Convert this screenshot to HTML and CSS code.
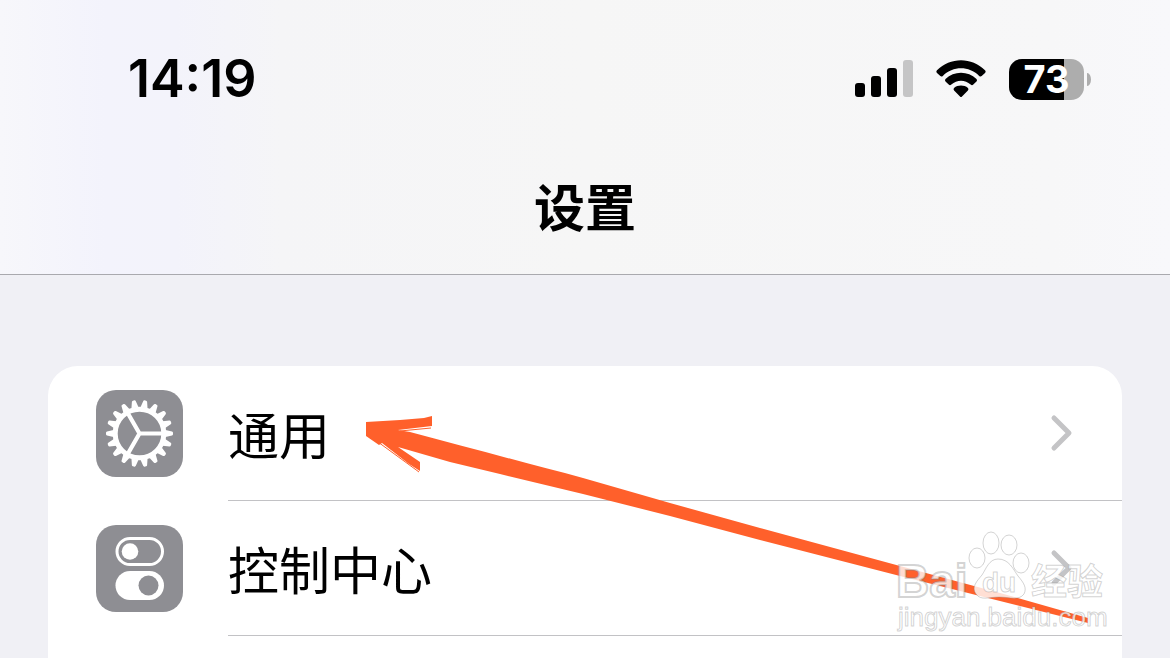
FILE: index.html
```html
<!DOCTYPE html>
<html lang="zh-CN">
<head>
<meta charset="utf-8">
<meta name="viewport" content="width=device-width, initial-scale=1">
<title>设置</title>
<link rel="stylesheet" href="styles.css">
</head>
<body>
<div class="screen">
  <header class="header">
    <div class="status">
      <time class="clock">14:19</time>
      <div class="indicators">
        <svg class="signal" viewBox="0 0 58 38" aria-hidden="true">
          <rect x="0" y="23" width="10" height="14" rx="3"/>
          <rect x="16" y="16" width="10" height="21" rx="3"/>
          <rect x="32" y="8" width="10" height="29" rx="3"/>
          <rect class="signal-off" x="48" y="0" width="10" height="37" rx="3"/>
        </svg>
        <svg class="wifi" viewBox="0 0 50 38" aria-hidden="true">
          <path d="M1 10.200Q-.3 11.500 1 12.900L4.300 16Q5.500 17 6.800 15.900C17 5.800 33 5.800 43.200 15.900Q44.500 17 45.700 16L49 12.900Q50.300 11.500 49 10.200C36-3.200 14-3.200 1 10.200Z"/>
          <path d="M9.500 19Q8.400 20.200 9.500 21.400L12.700 24.600Q14 25.700 15.300 24.600C21 19.400 29 19.400 34.700 24.600Q36 25.700 37.300 24.600L40.500 21.400Q41.600 20.200 40.500 19C32 10.800 18 10.800 9.500 19Z"/>
          <path d="M18 28Q17 29.300 18.100 30.400L24 36.400Q25 37.400 26 36.400L31.900 30.400Q33 29.300 32 28C28 24.800 22 24.800 18 28Z"/>
        </svg>
        <div class="battery"><span class="battery-body">73</span><span class="battery-cap"></span></div>
      </div>
    </div>
    <h1 class="title">设置</h1>
  </header>

  <main class="content">
    <nav class="card">
      <a class="row" href="#general">
        <svg class="icon" viewBox="0 0 87 87" aria-hidden="true">
          <defs><path id="tooth" d="M-3.600-26L-2-32.500Q-1.700-33.500-.8-33.500H.8Q1.700-33.500 2-32.500L3.600-26Z"/></defs>
          <g transform="translate(43.500 43.500)" fill="#fff">
            <use href="#tooth" transform="rotate(10)"/><use href="#tooth" transform="rotate(30)"/>
            <use href="#tooth" transform="rotate(50)"/><use href="#tooth" transform="rotate(70)"/>
            <use href="#tooth" transform="rotate(90)"/><use href="#tooth" transform="rotate(110)"/>
            <use href="#tooth" transform="rotate(130)"/><use href="#tooth" transform="rotate(150)"/>
            <use href="#tooth" transform="rotate(170)"/><use href="#tooth" transform="rotate(190)"/>
            <use href="#tooth" transform="rotate(210)"/><use href="#tooth" transform="rotate(230)"/>
            <use href="#tooth" transform="rotate(250)"/><use href="#tooth" transform="rotate(270)"/>
            <use href="#tooth" transform="rotate(290)"/><use href="#tooth" transform="rotate(310)"/>
            <use href="#tooth" transform="rotate(330)"/><use href="#tooth" transform="rotate(350)"/>
            <circle r="24.300" fill="none" stroke="#fff" stroke-width="5"/>
            <path d="M0 0H23M0 0L-11.500-20M0 0L-11.500 20" fill="none" stroke="#fff" stroke-width="4.200"/>
          </g>
        </svg>
        <span class="row-body">
          <span class="label">通用</span>
          <svg class="chevron" viewBox="0 0 24 38" aria-hidden="true"><path d="M4 4L19 19L4 34"/></svg>
        </span>
      </a>
      <a class="row" href="#control-center">
        <svg class="icon" viewBox="0 0 87 87" aria-hidden="true">
          <rect x="21" y="13.500" width="45.500" height="26" rx="13" fill="none" stroke="#fff" stroke-width="3"/>
          <circle cx="34" cy="26.500" r="8.300" fill="#fff"/>
          <rect x="19.500" y="46" width="48.500" height="29" rx="14.500" fill="#fff"/>
          <circle cx="52.500" cy="60.500" r="10" fill="#8e8e93"/>
        </svg>
        <span class="row-body">
          <span class="label">控制中心</span>
          <svg class="chevron" viewBox="0 0 24 38" aria-hidden="true"><path d="M4 4L19 19L4 34"/></svg>
        </span>
      </a>
      <svg class="arrow" viewBox="365 415 725 210" aria-hidden="true">
        <path d="M366 422L400 420L424 418L432 416V426L398 430L410 432C470 448 530 464 583 478L670 503L760 528L900 566L1000 593L1088 618V623L1000 601L900 576L760 540L670 516L583 494L500 474L450 462L398 447L420 462V471L409 464L382 443L379 445L366 436Z"/>
        <path class="bristle" d="M400 431L431 428M378 442L419 472"/>
      </svg>
    </nav>
  </main>

  <svg class="watermark" viewBox="896 530 212 104" role="img" aria-label="Baidu经验">
    <ellipse cx="977" cy="558" rx="8" ry="10"/>
    <ellipse cx="991" cy="543" rx="8" ry="11"/>
    <ellipse cx="1009" cy="545" rx="8" ry="10"/>
    <ellipse cx="1021" cy="563" rx="8" ry="10"/>
    <path d="M998 559C1009 559 1013 569 1018 576C1024 583 1027 588 1024 594C1019 601 1009 597 999 597C989 597 981 601 976 594C971 587 977 581 982 575C986 569 989 559 998 559Z"/>
    <text class="wm-name" x="896" y="597">Bai</text>
    <text class="wm-du" x="982" y="592">du</text>
    <text class="wm-cjk" x="1031" y="595">经验</text>
    <text class="wm-url" x="898" y="626">jingyan.baidu.com</text>
  </svg>
</div>
</body>
</html>
```
FILE: styles.css
```css
* { box-sizing: border-box; }

body {
  margin: 0;
  background: #f0f0f5;
  color: #000;
  font-family: Inter, "Noto Sans CJK SC", sans-serif;
}

.screen {
  position: relative;
  display: flex;
  flex-direction: column;
  height: 100vh;
  overflow: hidden;
}

.header {
  flex: none;
  padding-bottom: 14px;
  border-bottom: 1px solid #a9a9ae;
  background: linear-gradient(90deg, #f7f7fb 0, #f3f3fc 9%, #f3f3fb 15%, #f5f5f7 24%, #f6f6f6 50%, #f7f7f8 90%, #f8f8fb 100%);
}

.status {
  display: flex;
  align-items: center;
  justify-content: space-between;
  height: 158px;
  padding: 0 79px 0 128px;
}

.clock {
  font-size: 52px;
  font-weight: 600;
  line-height: 60px;
}

.indicators {
  display: flex;
  align-items: center;
  gap: 23px;
}

.signal { width: 58px; height: 38px; }
.signal-off { fill: #c5c5c6; }
.wifi { width: 50px; height: 38px; }

.battery {
  display: flex;
  align-items: center;
  gap: 3px;
}

.battery-body {
  width: 75px;
  height: 41px;
  border-radius: 13px;
  background: linear-gradient(90deg, #000 55px, #adadad 55px);
  color: #fff;
  font-size: 38px;
  font-weight: 700;
  line-height: 41px;
  text-align: center;
}

.battery-cap {
  width: 4px;
  height: 13px;
  border-radius: 0 4px 4px 0 / 0 7px 7px 0;
  background: #adadad;
}

.title {
  margin: 0;
  font-size: 51px;
  font-weight: 600;
  line-height: 102px;
  text-align: center;
}

.content {
  flex: 1;
  display: flex;
  flex-direction: column;
  padding: 91px 48px 0;
}

.card {
  position: relative;
  flex: 1;
  border-radius: 30px 30px 0 0;
  background: #fff;
}

.row {
  display: flex;
  align-items: center;
  gap: 45px;
  height: 135px;
  padding-left: 48px;
  color: inherit;
  text-decoration: none;
}

.icon {
  flex: none;
  width: 87px;
  height: 87px;
  border-radius: 20px;
  background: #8e8e93;
}

.row-body {
  flex: 1;
  display: flex;
  align-items: center;
  justify-content: space-between;
  height: 100%;
  padding-right: 48px;
  border-bottom: 1px solid #c2c2c5;
}

.label {
  padding-top: 8px;
  font-size: 51px;
  line-height: 72px;
}

.chevron { width: 24px; height: 38px; }

.chevron path {
  fill: none;
  stroke: #c4c4c6;
  stroke-width: 5;
  stroke-linecap: round;
  stroke-linejoin: round;
}

.arrow {
  position: absolute;
  left: 317px;
  top: 49px;
  width: 725px;
  height: 210px;
  fill: #ff602b;
  pointer-events: none;
}

.bristle {
  fill: none;
  stroke: #ff602b;
  stroke-width: 1;
}

.watermark {
  position: absolute;
  right: 62px;
  bottom: 24px;
  width: 212px;
  height: 104px;
  fill: rgba(255, 255, 255, 0.8);
  stroke: rgba(130, 130, 130, 0.35);
  stroke-width: 1;
  pointer-events: none;
}

.wm-name {
  font: 700 46px "Liberation Sans", sans-serif;
  stroke-width: 2;
}

.wm-du {
  font: 700 28px "Liberation Sans", sans-serif;
}

.wm-cjk {
  font: 700 36px "Noto Sans CJK SC", sans-serif;
}

.wm-url {
  font: 400 26px "Liberation Sans", sans-serif;
}
```
